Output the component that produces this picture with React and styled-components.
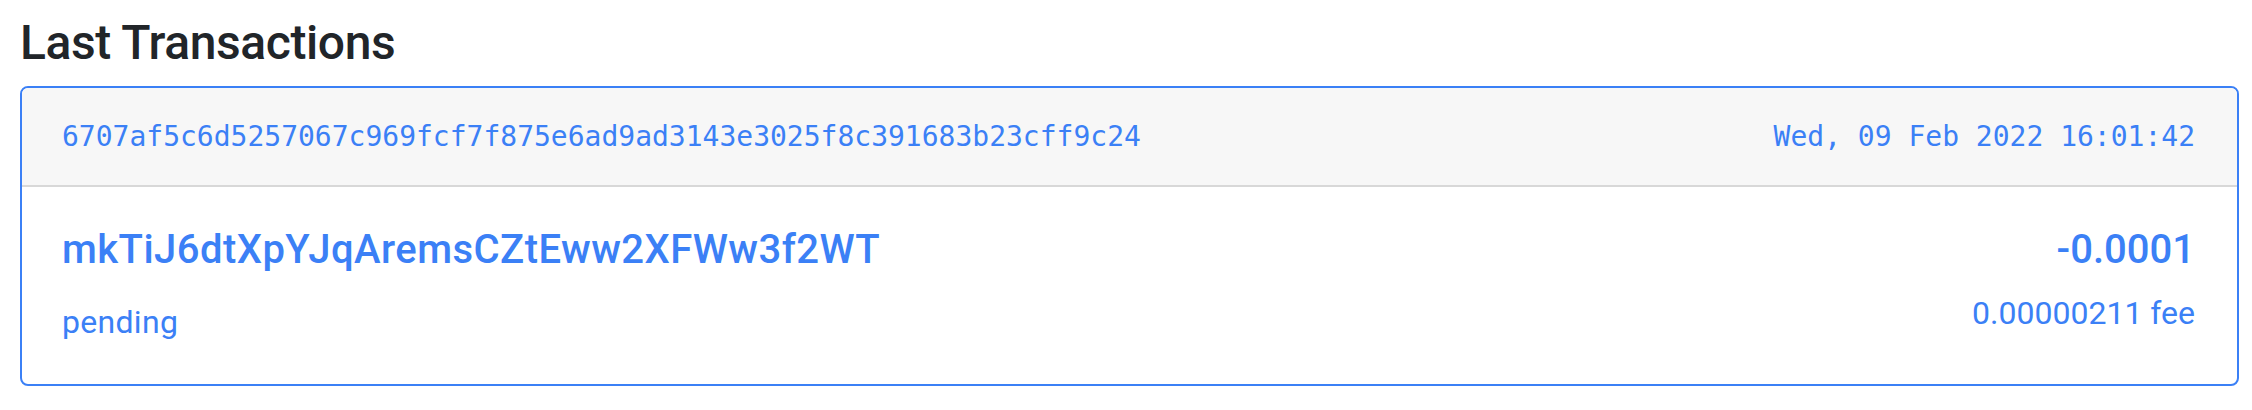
import styled, { createGlobalStyle } from "styled-components";

const GlobalStyle = createGlobalStyle`
  html, body {
    margin: 0;
    padding: 0;
    background: #fff;
  }
  body {
    font-family: Roboto, "Liberation Sans", Arial, sans-serif;
    color: #212529;
  }
`;

const Page = styled.div`
  padding: 14px 13px 24px 20px;
`;

const Title = styled.h2`
  margin: 0 0 14px 0;
  font-size: 48px;
  font-weight: 500;
  line-height: 58px;
  letter-spacing: -0.4px;
  color: #212529;
`;

const Card = styled.div`
  border: 2px solid #3b80f6;
  border-radius: 8px;
  overflow: hidden;
  background: #fff;
`;

const CardHeader = styled.div`
  display: flex;
  justify-content: space-between;
  align-items: center;
  padding: 28px 42px 27px 40px;
  background: #f7f7f7;
  border-bottom: 2px solid #d8d8d8;
`;

const Mono = styled.span`
  font-family: "DejaVu Sans Mono", "Liberation Mono", monospace;
  font-size: 28px;
  line-height: 42px;
  color: #3b80f6;
`;

const CardBody = styled.div`
  display: flex;
  justify-content: space-between;
  padding: 39px 42px 38px 40px;
`;

const Column = styled.div`
  display: flex;
  flex-direction: column;
  align-items: ${(p) => (p.$right ? "flex-end" : "flex-start")};
  gap: ${(p) => (p.$right ? "15px" : "24px")};
`;

const Big = styled.div`
  font-size: 40px;
  font-weight: 500;
  line-height: 48px;
  letter-spacing: ${(p) => p.$spacing || "0"};
  color: #3b80f6;
`;

const Small = styled.div`
  font-size: 32px;
  line-height: 48px;
  letter-spacing: ${(p) => p.$spacing || "0"};
  color: #3b80f6;
`;

const tx = {
  hash: "6707af5c6d5257067c969fcf7f875e6ad9ad3143e3025f8c391683b23cff9c24",
  date: "Wed, 09 Feb 2022 16:01:42",
  address: "mkTiJ6dtXpYJqAremsCZtEww2XFWw3f2WT",
  status: "pending",
  amount: "-0.0001",
  fee: "0.00000211",
};

export default function App() {
  return (
    <>
      <GlobalStyle />
      <Page>
        <Title>Last Transactions</Title>
        <Card>
          <CardHeader>
            <Mono>{tx.hash}</Mono>
            <Mono>{tx.date}</Mono>
          </CardHeader>
          <CardBody>
            <Column>
              <Big $spacing="0.45px">{tx.address}</Big>
              <Small $spacing="0.3px">{tx.status}</Small>
            </Column>
            <Column $right>
              <Big>{tx.amount}</Big>
              <Small>{tx.fee} fee</Small>
            </Column>
          </CardBody>
        </Card>
      </Page>
    </>
  );
}
